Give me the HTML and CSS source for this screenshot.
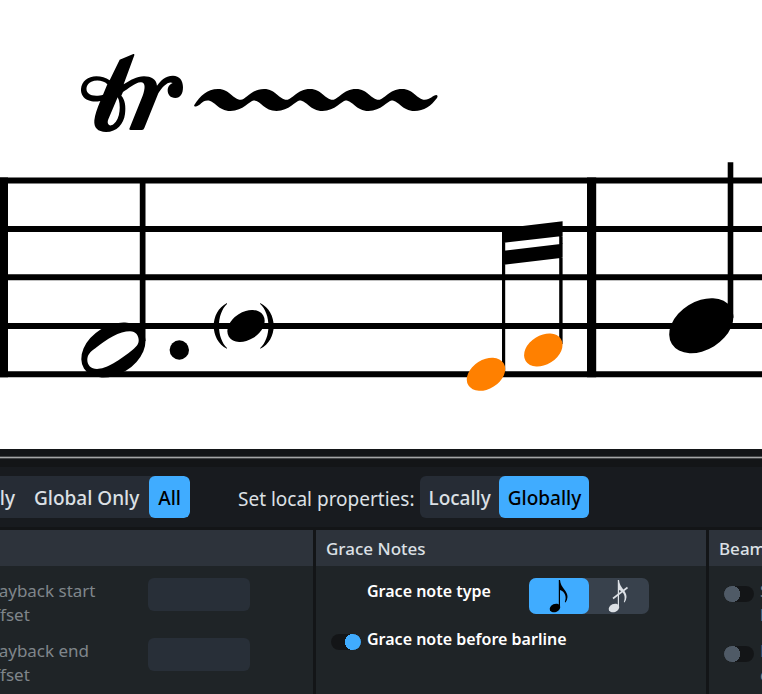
FILE: index.html
```html
<!DOCTYPE html>
<html lang="en">

<head>
    <title>Properties</title>
    <meta charset="UTF-8">
    <meta name="viewport" content="width=device-width, initial-scale=1">
    <link rel="stylesheet" href="styles.css">
</head>

<body>
    <!-- score -->
    <svg class="score" viewBox="0 0 762 449" role="img" aria-label="Score">
        <!-- staff lines -->
        <path class="staff" d="M0 180.5H762M0 229H762M0 277.3H762M0 326H762M0 374.3H762" />
        <!-- barlines -->
        <path d="M0 177.5H8V377.3H0zM587 177.5H596.2V377.3H587z" />

        <!-- trill -->
        <g transform="translate(75 50) scale(.3333)">
            <path fill-rule="evenodd" d="M134 29L175 12Q179 11 178 16L146 103C168 90 184 79 207 79C228 79 244 87 246 107C257 93 269 78 294 77C314 77 324 92 324 112C324 132 316 144 301 144C286 144 278 134 278 121C278 109 286 102 293 99C281 92 262 109 250 130L208 234Q206 240 201 240H167Q161 240 164 234L203 137C212 114 211 96 197 97C181 97 157 119 144 126L139 137C150 148 153 170 150 192C146 222 126 246 93 246C68 246 56 233 58 211C60 194 66 177 76 153C65 155 52 156 40 151C25 145 17 132 18 117C20 94 39 79 64 79C79 79 92 83 104 91ZM97 103C86 91 64 89 49 95C34 102 30 119 40 130C51 140 72 138 84 134ZM128 142L100 208C94 223 104 232 116 222C136 208 139 162 128 142Z" />
        </g>
        <path d="M194.3 105C200 96 207 89 218 89C230 89 233 99.8 240.8 99.8C246 99.8 251 89 264 89C276 89 279 99.8 286.8 99.8C292 99.8 297 89 310 89C322 89 325 99.8 332.8 99.8C338 99.8 343 89 356 89C368 89 371 99.8 378.8 99.8C384 99.8 389 89 402 89C414 89 417 99.8 424.8 99.8C430 99.8 433 95 436.5 95Q438.3 95.5 437 98C431 106 424 111 414.5 111C402 111 399 100.5 391.5 100.5C388 100.5 381 111 368.5 111C356 111 353 100.5 345.5 100.5C342 100.5 335 111 322.5 111C310 111 307 100.5 299.5 100.5C296 100.5 289 111 276.5 111C264 111 261 100.5 253.5 100.5C250 100.5 243 111 230.5 111C218 111 215 100.5 207.5 100.5C202 100.5 200 106 196 106.5Q193.5 107 194.3 105Z" />

        <!-- dotted half note -->
        <path d="M139.8 180H145.5V341H139.8z" />
        <ellipse cx="113.4" cy="350" rx="34.7" ry="24.2" transform="rotate(-32 113.4 350)" />
        <path fill="#fff" d="M87.3 360C87.3 355 90 352 95 348.5C101 343.5 107 339.5 113 336.3C119 333 125 331.3 130 331.3C136 331.3 138.7 336 138.7 340C138.7 344 137 346 133 349.5C127 354.5 120 359.5 113.5 363.3C107 367 101 369 97 369C91 369 87.3 365 87.3 360Z" />
        <circle cx="179.3" cy="350" r="9.7" />

        <!-- trill note in parentheses -->
        <ellipse cx="246" cy="326" rx="20.2" ry="14" transform="rotate(-32 246 326)" />
        <path d="M227 303C209.3 312 209.3 340 227 348.8V348C216.3 338 216.3 314 227 304zM260.2 303C278.2 312 278.2 340 260.2 348.8V348C271.2 338 271.2 314 260.2 304z" />

        <!-- grace notes -->
        <path d="M502 229H505.2V372H502zM559.2 222H562.6V344H559.2zM502 228.5L562.6 221.3V236L502 243zM502 251L562.6 243.7V257.8L502 265z" />
        <g fill="#ff8000">
            <ellipse cx="486" cy="374.3" rx="20.8" ry="14.5" transform="rotate(-32 486 374.3)" />
            <ellipse cx="543.3" cy="350" rx="20.8" ry="14.5" transform="rotate(-32 543.3 350)" />
        </g>

        <!-- quarter note -->
        <path d="M727.7 162.3H733.3V318H727.7z" />
        <ellipse cx="701.3" cy="325.7" rx="34.7" ry="24.2" transform="rotate(-32 701.3 325.7)" />
    </svg>

    <div class="splitter"></div>

    <div class="toolbar">
        <div class="group filter">
            <button type="button">Local Only</button>
            <button type="button">Global Only</button>
            <button type="button" class="active">All</button>
        </div>
        <span class="caption">Set local properties:</span>
        <div class="group">
            <button type="button">Locally</button>
            <button type="button" class="active">Globally</button>
        </div>
    </div>

    <div class="panels">
        <section class="panel playback">
            <h2></h2>
            <div class="row">
                <label for="start">Playback start offset</label>
                <input type="text" id="start" disabled>
            </div>
            <div class="row">
                <label for="end">Playback end offset</label>
                <input type="text" id="end" disabled>
            </div>
        </section>

        <section class="panel grace">
            <h2>Grace Notes</h2>
            <div class="row">
                <span class="name">Grace note type</span>
                <div class="types">
                    <button type="button" class="active" aria-label="Appoggiatura">
                        <svg width="24" height="36" viewBox="0 0 24 36">
                            <ellipse cx="8" cy="30" rx="5.5" ry="4" transform="rotate(-25 8 30)" />
                            <path d="M11.8 2H13C13.5 10 21 13 20.5 19Q20.4 22 18.5 24.5L17.8 24C20 19 18 13.5 13 12V30H11.8z" />
                        </svg>
                    </button>
                    <button type="button" aria-label="Acciaccatura">
                        <svg width="24" height="36" viewBox="0 0 24 36">
                            <ellipse cx="7" cy="30" rx="5.5" ry="4" transform="rotate(-25 7 30)" />
                            <path d="M10.8 2H12C12.5 10 20 13 19.5 19Q19.4 22 17.5 24.5L16.8 24C19 19 17 13.5 12 12V30H10.8z" />
                            <path d="M6 20.5L20.5 9.5" stroke="currentColor" stroke-width="1.6" />
                        </svg>
                    </button>
                </div>
            </div>
            <div class="row">
                <input type="checkbox" class="switch" id="before" checked>
                <label for="before">Grace note before barline</label>
            </div>
        </section>

        <section class="panel beams">
            <h2>Beams</h2>
            <div class="row">
                <input type="checkbox" class="switch" id="slope">
                <label for="slope">Slope<br>height</label>
            </div>
            <div class="row">
                <input type="checkbox" class="switch" id="line">
                <label for="line">Beam<br>corner</label>
            </div>
        </section>
    </div>
</body>

</html>
```

FILE: styles.css
```css
* {
    box-sizing: border-box;
    margin: 0;
    padding: 0;
}

body {
    background: #131517;
    color: #dce0e5;
    font-family: "Noto Sans", "Open Sans", sans-serif;
    font-size: 17px;
    line-height: 24px;
    overflow: hidden;
}

button,
input {
    border: none;
    color: inherit;
    font: inherit;
}

.score {
    display: block;
    width: 100%;
    background: #fff;
}

.staff {
    stroke: #000;
    stroke-width: 6;
}

.splitter {
    height: 18px;
    background: linear-gradient(#131517 7px, #434546 7px 8px, #a5a6a7 8px 9px, #434546 9px 10px, #131517 10px);
}

/* toolbar */
.toolbar {
    display: flex;
    align-items: center;
    height: 60px;
    margin-bottom: 3px;
    background: #181b1f;
    font-size: 19px;
    white-space: nowrap;
}

.group {
    display: flex;
    height: 42px;
    border-radius: 6px;
    background: #262c35;
}

.group button {
    padding: 2px 8px 0 9px;
    border-radius: 6px;
    background: none;
    font-weight: 500;
}

.filter {
    justify-content: flex-end;
    gap: 1px;
    width: 190px;
    margin-right: 48px;
    border-radius: 0 6px 6px 0;
    overflow: hidden;
}

.filter button {
    padding: 2px 9px 0;
}

.group .active {
    background: #40acff;
    color: #000;
}

.caption {
    margin-right: 5px;
    padding-top: 4px;
}

/* property panels */
.panels {
    display: grid;
    grid-template-columns: 313px 390px minmax(0, 1fr);
    gap: 3px;
}

.panel {
    padding-bottom: 10px;
    background: #1f2427;
    overflow: hidden;
    white-space: nowrap;
}

.panel h2 {
    height: 36px;
    margin-bottom: 12px;
    padding: 0 10px;
    background: #2d333b;
    font-size: 17px;
    font-weight: 500;
    line-height: 38px;
}

.row {
    display: flex;
    align-items: flex-start;
}

.row label,
.name {
    padding-top: 1px;
}

.playback .row {
    height: 60px;
    margin-left: -16px;
    color: #7f868b;
    white-space: normal;
}

.playback label {
    width: 124px;
    margin-right: 40px;
}

.playback input {
    width: 102px;
    height: 33px;
    border-radius: 6px;
    background: #282f38;
}

.grace .row {
    height: 48px;
    padding-left: 15px;
    color: #fff;
    font-size: 16px;
    font-weight: 600;
}

.name {
    width: 162px;
    margin-left: 36px;
}

.types {
    display: flex;
    border-radius: 7px;
    background: #38414c;
}

.types button {
    width: 60px;
    height: 36px;
    border-radius: 7px;
    background: none;
    color: #dce0e5;
}

.types .active {
    background: #40acff;
    color: #000;
}

.types svg {
    display: block;
    margin: 0 auto;
    fill: currentColor;
}

.switch {
    flex: none;
    appearance: none;
    width: 30px;
    height: 16px;
    margin: 8px 6px 0 0;
    border-radius: 8px;
    background: radial-gradient(circle at 8px 8px, #4f5a66 8px, #131517 8px);
}

.switch:checked {
    background: radial-gradient(circle at 22px 8px, #40acff 8px, #131517 8px);
}

.beams .row {
    height: 60px;
    padding-left: 15px;
    color: #7f868b;
}
```
